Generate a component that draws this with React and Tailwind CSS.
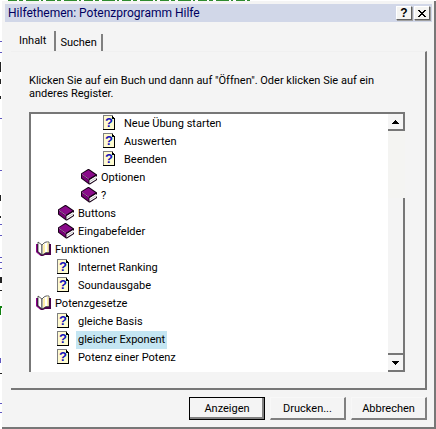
import React, { useState } from 'react';

const topics = [
  { id: 'neue-uebung', title: 'Neue Übung starten', type: 'page', level: 3 },
  { id: 'auswerten', title: 'Auswerten', type: 'page', level: 3 },
  { id: 'beenden', title: 'Beenden', type: 'page', level: 3 },
  { id: 'optionen', title: 'Optionen', type: 'book', level: 2 },
  { id: 'hilfe', title: '?', type: 'book', level: 2 },
  { id: 'buttons', title: 'Buttons', type: 'book', level: 1 },
  { id: 'eingabefelder', title: 'Eingabefelder', type: 'book', level: 1 },
  { id: 'funktionen', title: 'Funktionen', type: 'open', level: 0 },
  { id: 'ranking', title: 'Internet Ranking', type: 'page', level: 1 },
  { id: 'sound', title: 'Soundausgabe', type: 'page', level: 1 },
  { id: 'potenzgesetze', title: 'Potenzgesetze', type: 'open', level: 0 },
  { id: 'basis', title: 'gleiche Basis', type: 'page', level: 1 },
  { id: 'exponent', title: 'gleicher Exponent', type: 'page', level: 1 },
  { id: 'potenz', title: 'Potenz einer Potenz', type: 'page', level: 1 },
];

const indents = ['pl-[3px]', 'pl-[26px]', 'pl-[49px]', 'pl-[72px]'];

function PageIcon() {
  return (
    <svg width="19" height="18" viewBox="0 0 19 18" shapeRendering="crispEdges" aria-hidden="true">
      <path d="M1 1h9l1 2v11H1z" fill="#fffbd0" />
      <path d="M0 0h10v1H1v13H0z" fill="#808080" />
      <path d="M9 1h1v1h1v1h1v12H0v-1h11V4H9z" fill="#000" />
      <text
        x="6"
        y="12"
        textAnchor="middle"
        fill="#1010b8"
        className="text-[13px] font-bold"
        fontFamily="Liberation Sans, sans-serif"
      >
        ?
      </text>
    </svg>
  );
}

function BookIcon() {
  return (
    <svg width="19" height="18" viewBox="0 0 19 18" aria-hidden="true">
      <path d="M1 4.500L8 0h1l8 5.500V7l-1 1v1l1 1v1l-7 4.500H9L1 9.500z" fill="#180018" />
      <path d="M2 4.800L8.500 1 15.500 5.800 9 9.800z" fill="#8a0a8a" />
      <path d="M2 6l6.500 4.800V14L2 9z" fill="#780078" />
      <path d="M2 5.300l7 5" stroke="#e090e0" strokeWidth="0.700" />
      <path d="M9.500 11L16 7v3.500l-6.500 4z" fill="#fff" />
      <path d="M9.500 12.800l6.500-4" stroke="#909090" strokeWidth="0.600" />
      <path d="M9 10.500L16.500 6" stroke="#180018" strokeWidth="0.800" />
    </svg>
  );
}

function OpenBookIcon() {
  return (
    <svg width="19" height="18" viewBox="0 0 19 18" aria-hidden="true">
      <path d="M2 3h2v7l4 3 3-1h4V3h2v11h-6l-2 1H7l-2-2-3-2z" fill="#4a004a" />
      <path d="M2.500 3v8l4 3.500" fill="none" stroke="#900090" />
      <path d="M4 1l4 3v10l-4-3.500z" fill="#fff" stroke="#333" strokeWidth="0.800" />
      <path d="M8 4l2-2 2-1h3v10.500h-3L8 14z" fill="#fff" stroke="#333" strokeWidth="0.800" />
      <path d="M9 4.500l2-2v9L9 12.500zM13 1.500h1.500v9.500H13z" fill="#fff0a8" />
    </svg>
  );
}

const icons = { page: PageIcon, book: BookIcon, open: OpenBookIcon };

function CaptionButton({ label, children }) {
  return (
    <button
      type="button"
      aria-label={label}
      className="flex h-3.5 w-4 items-center justify-center border border-t-white border-l-white border-r-[#606060] border-b-[#606060] bg-[#f4f4f2] shadow-[1px_1px_0_#a0a0a0]"
    >
      {children}
    </button>
  );
}

function DialogButton({ primary, children }) {
  return (
    <button
      type="button"
      className={
        primary
          ? 'h-[23px] w-[76px] border border-black bg-[#f4f4f4] text-center shadow-[inset_-2px_-2px_0_#808080]'
          : 'h-[23px] w-[76px] border-t border-l border-r-2 border-b-2 border-t-[#f8f8f8] border-l-[#f8f8f8] border-r-[#808080] border-b-[#808080] bg-[#f4f4f4] text-center'
      }
    >
      {children}
    </button>
  );
}

function ScrollButton({ label, d }) {
  return (
    <button
      type="button"
      aria-label={label}
      className="flex h-[17px] w-full shrink-0 items-center justify-center border-r-2 border-b-2 border-[#777] bg-[#f5f5f5]"
    >
      <svg width="7" height="4" viewBox="0 0 7 4" shapeRendering="crispEdges" aria-hidden="true">
        <path d={d} fill="#000" />
      </svg>
    </button>
  );
}

export default function App() {
  const [selected, setSelected] = useState('exponent');
  const [tab, setTab] = useState('inhalt');

  return (
    <div className="flex min-h-screen flex-col bg-white font-[Roboto,'Liberation_Sans',sans-serif] text-[11px] leading-[13px] text-black">
      {/* Page behind the dialog */}
      <svg className="h-px w-full" shapeRendering="crispEdges" aria-hidden="true">
        <path d="M8 0h242" stroke="#2e8b2e" strokeWidth="2" strokeDasharray="9 2 4 3 13 2 2 3" />
      </svg>

      <div className="flex flex-1">
        <svg className="w-0.5 shrink-0" shapeRendering="crispEdges" aria-hidden="true">
          <path d="M0 40h2v1h-2zM0 51h2v1h-2zM0 117h2v1h-2zM0 169h2v1h-2zM0 223h2v1h-2zM0 234h2v1h-2zM0 256h2v1h-2zM0 261h2v1h-2zM0 267h2v1h-2zM0 357h1v5h-1zM0 402h2v1h-2zM0 411h2v1h-2z" fill="#6058c0" />
          <path d="M0 61h1v10h-1zM0 78h1v5h-1zM0 95h1v3h-1zM0 194h1v6h-1zM0 215h1v2h-1zM0 276h2v6h-2zM0 289h2v1h-2zM0 372h2v1h-2z" fill="#222" />
          <path d="M0 305h2v2h-2zM0 307h1v7h-1z" fill="#108010" />
        </svg>

        <section
          role="dialog"
          aria-labelledby="title"
          className="flex min-w-0 flex-1 flex-col border-r-2 border-b-2 border-[#777] bg-[#f4f4f4] pt-[3px]"
        >
          {/* Title bar */}
          <header className="mr-0.5 ml-[3px] flex h-[18px] items-center justify-between bg-[#d1d7e8] pr-0.5 pl-[3px]">
            <h1 id="title" className="text-[12px] text-[#000060]">
              Hilfethemen: Potenzprogramm Hilfe
            </h1>
            <div className="flex gap-0.5">
              <CaptionButton label="Hilfe">
                <span className="font-['Liberation_Sans',sans-serif] text-[12px] font-bold">?</span>
              </CaptionButton>
              <CaptionButton label="Schließen">
                <svg width="8" height="7" viewBox="0 0 8 7" shapeRendering="crispEdges" aria-hidden="true">
                  <path d="M0 0h2v1h1v1h2V1h1V0h2v1H7v1H6v1H5v1h1v1h1v1h1v1H6V6H5V5H3v1H2v1H0V6h1V5h1V4h1V3H2V2H1V1H0z" fill="#000" />
                </svg>
              </CaptionButton>
            </div>
          </header>

          <div className="flex flex-1 flex-col pt-[9px] pr-[7px] pb-[7px] pl-[9px]">
            {/* Tabs */}
            <div role="tablist" className="flex items-end">
              <button
                type="button"
                role="tab"
                aria-selected={tab === 'inhalt'}
                onClick={() => setTab('inhalt')}
                className="h-5 border-r-2 border-[#808080] pr-2 pb-0.5 pl-2"
              >
                Inhalt
              </button>
              <button
                type="button"
                role="tab"
                aria-selected={tab === 'suchen'}
                onClick={() => setTab('suchen')}
                className="h-[17px] border-r-2 border-[#808080] px-1"
              >
                Suchen
              </button>
            </div>

            {/* Tab panel */}
            <div
              role="tabpanel"
              className="flex flex-1 flex-col border-t border-r-2 border-b-2 border-t-[#f0f0f0] border-r-[#777] border-b-[#777] pt-[22px] pr-5 pb-4 pl-[18px]"
            >
              <p className="pr-4">
                Klicken Sie auf ein Buch und dann auf &quot;Öffnen&quot;. Oder klicken Sie auf ein
                anderes Register.
              </p>

              <div className="mt-3 flex flex-1 border-t-2 border-l-2 border-[#777] bg-white">
                <ul role="tree" aria-label="Hilfethemen" className="min-w-0 flex-1 pt-px">
                  {topics.map((topic) => {
                    const Icon = icons[topic.type];
                    const active = topic.id === selected;
                    return (
                      <li key={topic.id} role="treeitem" aria-level={topic.level + 1} aria-selected={active}>
                        <button
                          type="button"
                          onClick={() => setSelected(topic.id)}
                          className={`flex h-[18px] items-center ${indents[topic.level]}`}
                        >
                          <Icon />
                          <span className={active ? 'bg-[#c4e5f2] px-0.5 leading-[18px]' : 'px-0.5 leading-[18px]'}>
                            {topic.title}
                          </span>
                        </button>
                      </li>
                    );
                  })}
                </ul>

                {/* Scrollbar */}
                <div className="flex w-[17px] shrink-0 flex-col bg-[#f4f4f2]">
                  <ScrollButton label="Nach oben" d="M3 0h1v1h1v1h1v1h1v1H0V3h1V2h1V1h1z" />
                  <div className="flex-[3]" />
                  <div className="flex-[7] border-r-2 border-b-2 border-[#777] bg-[#f4f4f4]" />
                  <ScrollButton label="Nach unten" d="M0 0h7v1H6v1H5v1H4v1H3V3H2V2H1V1H0z" />
                </div>
              </div>
            </div>

            {/* Buttons */}
            <div className="mt-[7px] flex justify-end gap-[5px]">
              <DialogButton primary>Anzeigen</DialogButton>
              <DialogButton>Drucken...</DialogButton>
              <DialogButton>Abbrechen</DialogButton>
            </div>
          </div>
        </section>
      </div>
    </div>
  );
}
